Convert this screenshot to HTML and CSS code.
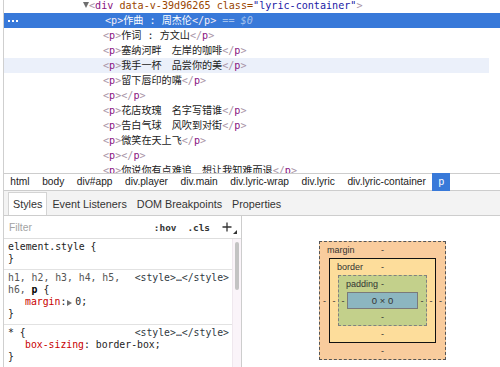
FILE: index.html
```html
<!DOCTYPE html>
<html>
<head>
<meta charset="utf-8">
<link rel="stylesheet" href="styles.css">
</head>
<body>
<div class="devtools">
  <div class="elements">
    <div class="tree">
      <div class="row open"><span class="twisty"></span><span class="br">&lt;</span><span class="tag">div</span> <span class="an">data-v-39d96265</span> <span class="an">class=</span><span class="av">"lyric-container"</span><span class="br">&gt;</span></div>
      <div class="row sel"><span class="dots"></span><span class="br">&lt;</span><span class="tag">p</span><span class="br">&gt;</span>作曲 : 周杰伦<span class="br">&lt;/</span><span class="tag">p</span><span class="br">&gt;</span><span class="eq"> == <i>$0</i></span></div>
      <div class="row"><span class="br">&lt;</span><span class="tag">p</span><span class="br">&gt;</span>作词 : 方文山<span class="br">&lt;/</span><span class="tag">p</span><span class="br">&gt;</span></div>
      <div class="row"><span class="br">&lt;</span><span class="tag">p</span><span class="br">&gt;</span>塞纳河畔　左岸的咖啡<span class="br">&lt;/</span><span class="tag">p</span><span class="br">&gt;</span></div>
      <div class="row hov"><span class="br">&lt;</span><span class="tag">p</span><span class="br">&gt;</span>我手一杯　品尝你的美<span class="br">&lt;/</span><span class="tag">p</span><span class="br">&gt;</span></div>
      <div class="row"><span class="br">&lt;</span><span class="tag">p</span><span class="br">&gt;</span>留下唇印的嘴<span class="br">&lt;/</span><span class="tag">p</span><span class="br">&gt;</span></div>
      <div class="row"><span class="br">&lt;</span><span class="tag">p</span><span class="br">&gt;&lt;/</span><span class="tag">p</span><span class="br">&gt;</span></div>
      <div class="row"><span class="br">&lt;</span><span class="tag">p</span><span class="br">&gt;</span>花店玫瑰　名字写错谁<span class="br">&lt;/</span><span class="tag">p</span><span class="br">&gt;</span></div>
      <div class="row"><span class="br">&lt;</span><span class="tag">p</span><span class="br">&gt;</span>告白气球　风吹到对街<span class="br">&lt;/</span><span class="tag">p</span><span class="br">&gt;</span></div>
      <div class="row"><span class="br">&lt;</span><span class="tag">p</span><span class="br">&gt;</span>微笑在天上飞<span class="br">&lt;/</span><span class="tag">p</span><span class="br">&gt;</span></div>
      <div class="row"><span class="br">&lt;</span><span class="tag">p</span><span class="br">&gt;&lt;/</span><span class="tag">p</span><span class="br">&gt;</span></div>
      <div class="row"><span class="br">&lt;</span><span class="tag">p</span><span class="br">&gt;</span>你说你有点难追　想让我知难而退<span class="br">&lt;/</span><span class="tag">p</span><span class="br">&gt;</span></div>
    </div>
  </div>

  <div class="crumbs">
    <span class="crumb">html</span>
    <span class="crumb">body</span>
    <span class="crumb">div#app</span>
    <span class="crumb">div.player</span>
    <span class="crumb">div.main</span>
    <span class="crumb">div.lyric-wrap</span>
    <span class="crumb">div.lyric</span>
    <span class="crumb">div.lyric-container</span>
    <span class="crumb cur">p</span>
  </div>

  <div class="tabs">
    <span class="tab active">Styles</span>
    <span class="tab">Event Listeners</span>
    <span class="tab">DOM Breakpoints</span>
    <span class="tab">Properties</span>
  </div>

  <div class="panes">
    <div class="styles">
      <div class="filter">
        <span class="ph">Filter</span>
        <span class="tool hov">:hov</span>
        <span class="tool cls">.cls</span>
        <svg class="plus" width="10" height="10" viewBox="0 0 10 10"><path d="M5 0.5V9.5M0.5 5H9.5" stroke="#333" stroke-width="1.3" fill="none"/></svg>
        <svg class="corner" width="4" height="4" viewBox="0 0 4 4"><path d="M4 0V4H0Z" fill="#333"/></svg>
      </div>
      <div class="rules-wrap">
        <div class="rules">
          <div class="section">
            <div class="line">element.style {</div>
            <div class="line">}</div>
          </div>
          <div class="section">
            <div class="line split"><span class="unm">h1, h2, h3, h4, h5,</span><span class="link">&lt;style&gt;…&lt;/style&gt;</span></div>
            <div class="line"><span class="unm">h6, </span><b class="match">p</b> {</div>
            <div class="line prop"><span class="pn">margin</span>:<span class="arrow"></span>0;</div>
            <div class="line">}</div>
          </div>
          <div class="section">
            <div class="line split"><span>* {</span><span class="link">&lt;style&gt;…&lt;/style&gt;</span></div>
            <div class="line prop"><span class="pn">box-sizing</span>: border-box;</div>
            <div class="line">}</div>
          </div>
        </div>
        <div class="sbar"><div class="thumb"></div></div>
      </div>
    </div>

    <div class="metrics">
      <div class="bm bm-margin">
        <div class="bm-top"><span class="bm-label">margin</span><span>-</span><span></span></div>
        <div class="bm-mid">
          <span class="bm-side">-</span>
          <div class="bm bm-border">
            <div class="bm-top"><span class="bm-label">border</span><span>-</span><span></span></div>
            <div class="bm-mid">
              <span class="bm-side">-</span>
              <div class="bm bm-padding">
                <div class="bm-top"><span class="bm-label">padding</span><span>-</span><span></span></div>
                <div class="bm-mid">
                  <span class="bm-side">-</span>
                  <div class="bm-content">0 × 0</div>
                  <span class="bm-side">-</span>
                </div>
                <div class="bm-bot">-</div>
              </div>
              <span class="bm-side">-</span>
            </div>
            <div class="bm-bot">-</div>
          </div>
          <span class="bm-side">-</span>
        </div>
        <div class="bm-bot">-</div>
      </div>
    </div>
  </div>
</div>
</body>
</html>
```

FILE: styles.css
```css
html, body {
  margin: 0;
  padding: 0;
}
body {
  width: 500px;
  height: 367px;
  overflow: hidden;
  background: #fff;
  font-family: "Liberation Sans", Arial, sans-serif;
  color: #222;
}
.devtools {
  margin-left: 3px;
  border-left: 1px solid #cfcfcf;
  height: 367px;
  display: flex;
  flex-direction: column;
}

/* DOM tree */
.elements {
  flex: none;
  height: 173px;
  overflow: hidden;
}
.tree {
  margin-top: -2px;
  font-family: "DejaVu Sans Mono", "Noto Sans CJK SC", monospace;
  font-size: 10.1px;
  color: #222;
}
.row {
  height: 15px;
  line-height: 15px;
  white-space: pre;
  padding-left: 99px;
}
.row.open {
  padding-left: 79px;
}
.row.sel {
  background: #3879d9;
  color: #fff;
  padding-left: 2px;
}
.row.hov {
  background: #ebf0fa;
}
.twisty {
  display: inline-block;
  width: 0;
  height: 0;
  border-left: 3.5px solid transparent;
  border-right: 3.5px solid transparent;
  border-top: 6px solid #6e6e6e;
  vertical-align: 1px;
}
.dots {
  display: inline-block;
  width: 2px;
  height: 2px;
  background: #fff;
  box-shadow: 4px 0 #fff, 8px 0 #fff;
  margin: 0 95px 0 2px;
  vertical-align: middle;
}
.br { color: #a894a6; }
.tag { color: #881280; }
.an { color: #994500; }
.av { color: #1a1aa6; }
.sel .br, .sel .tag { color: #f4ecf6; }
.eq { color: rgba(255, 255, 255, 0.55); }

/* breadcrumbs */
.crumbs {
  flex: none;
  height: 16px;
  border-top: 1px solid #cdcdcd;
  border-bottom: 1px solid #cdcdcd;
  display: flex;
  font-size: 10.2px;
  line-height: 16px;
  color: #222;
}
.crumb {
  padding: 0 6.3px;
  white-space: nowrap;
}
.crumb.cur {
  background: #3879d9;
  color: #fff;
  margin: -1px 0;
  height: 18px;
  line-height: 18px;
}

/* tabs */
.tabs {
  flex: none;
  height: 24px;
  background: #f3f3f3;
  border-bottom: 1px solid #cdcdcd;
  display: flex;
  align-items: flex-end;
  padding-left: 4px;
  font-size: 10.8px;
  color: #333;
}
.tab {
  padding: 0 4px;
  height: 22px;
  line-height: 22px;
  border: 1px solid transparent;
  border-bottom: none;
  white-space: nowrap;
}
.tab.active {
  background: #fff;
  border-color: #d4d4d4;
}

/* panes */
.panes {
  flex: 1;
  display: flex;
  min-height: 0;
}
.styles {
  flex: none;
  width: 237px;
  border-right: 1px solid #cdcdcd;
  display: flex;
  flex-direction: column;
}
.filter {
  flex: none;
  height: 22px;
  border-bottom: 1px solid #dedede;
  display: flex;
  align-items: center;
  padding: 0 4px 0 5px;
}
.ph {
  flex: 1;
  color: #a3a3a3;
  font-size: 10.3px;
}
.tool {
  font-family: "DejaVu Sans Mono", monospace;
  font-weight: bold;
  font-size: 9.4px;
  color: #333;
}
.hov { margin-right: 11px; }
.cls { margin-right: 12px; }
.plus { flex: none; }
.corner {
  flex: none;
  align-self: flex-end;
  margin: 0 0 4px 1px;
}
.rules-wrap {
  flex: 1;
  display: flex;
  min-height: 0;
}
.rules {
  flex: 1;
  font-family: "DejaVu Sans Mono", monospace;
  font-size: 9.8px;
  line-height: 12px;
  color: #222;
}
.section {
  padding: 2px 3px 4px 4px;
  border-bottom: 1px solid #e2e2e2;
}
.section:last-child { border-bottom: none; }
.line {
  height: 12px;
  white-space: pre;
}
.split {
  display: flex;
  justify-content: space-between;
}
.prop { padding-left: 17px; }
.pn { color: #c80000; }
.link { color: #303942; }
.unm { color: #555; }
.match { color: #000; }
.arrow {
  display: inline-block;
  width: 0;
  height: 0;
  border-left: 5px solid #727272;
  border-top: 3px solid transparent;
  border-bottom: 3px solid transparent;
  margin: 0 3px 0 1px;
  vertical-align: -0.5px;
}
.sbar {
  flex: none;
  width: 9px;
  background: #faf4f9;
  border-left: 1px solid #efe8ee;
  box-sizing: border-box;
  padding: 3px 2px 0 2px;
}
.thumb {
  height: 48px;
  background: #c3c3c3;
  border-radius: 3px;
}

/* box model */
.metrics {
  flex: 1;
  padding: 25px 0 0 77px;
  font-family: "Liberation Sans", Arial, sans-serif;
  font-size: 9px;
  color: #333;
}
.bm {
  display: flex;
  flex-direction: column;
  box-sizing: border-box;
}
.bm-margin {
  width: 127px;
  height: 119px;
  background: #f9cc9d;
  border: 1px dashed #555;
}
.bm-border {
  width: 107px;
  height: 85px;
  background: #fddd9b;
  border: 1px solid #111;
}
.bm-padding {
  width: 89px;
  height: 51px;
  background: #c3d08b;
  border: 1px dashed #808080;
}
.bm-content {
  width: 71px;
  height: 17px;
  box-sizing: border-box;
  background: #8cb6c0;
  border: 1px solid #7a7a7a;
  text-align: center;
  line-height: 15px;
  font-size: 9.5px;
}
.bm-top {
  flex: none;
  height: 16px;
  display: grid;
  grid-template-columns: minmax(0, 1fr) auto minmax(0, 1fr);
  line-height: 16px;
}
.bm-label {
  padding-left: 7px;
  white-space: nowrap;
}
.bm-mid {
  flex: 1;
  display: flex;
  align-items: center;
}
.bm-side {
  flex: 1;
  text-align: center;
}
.bm-bot {
  flex: none;
  height: 16px;
  line-height: 16px;
  text-align: center;
}
```
